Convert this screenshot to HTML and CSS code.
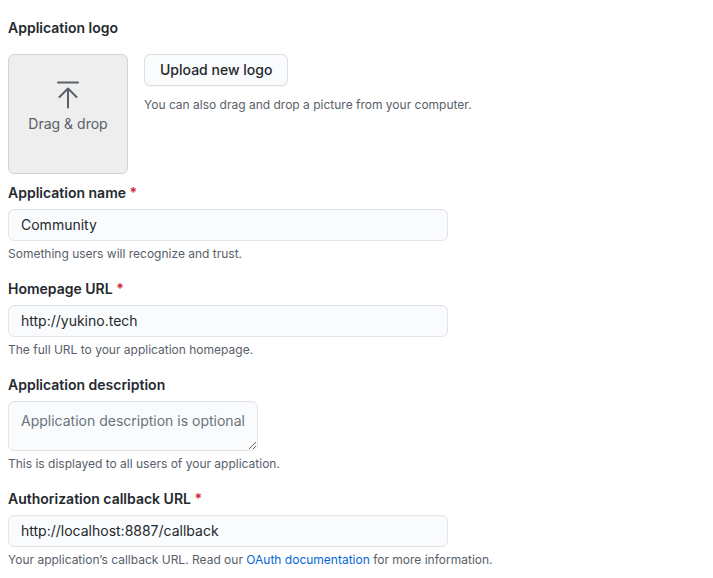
FILE: index.html
```html
<!DOCTYPE html>
<html lang="en">
<head>
<meta charset="utf-8">
<meta name="viewport" content="width=device-width, initial-scale=1">
<title>Application settings</title>
<link rel="stylesheet" href="styles.css">
</head>
<body>
<form class="settings">
  <section class="field">
    <h2 class="label">Application logo</h2>
    <div class="logo-row">
      <div class="dropzone">
        <svg class="upload-icon" viewBox="0 0 22 28" aria-hidden="true"><path d="M1 1.5h20M11 26.5V7.5M2.5 16L11 7.5l8.500 8.500"/></svg>
        <span>Drag &amp; drop</span>
      </div>
      <div class="logo-actions">
        <button class="button" type="button">Upload new logo</button>
        <p class="note">You can also drag and drop a picture from your computer.</p>
      </div>
    </div>
  </section>
  <div class="field">
    <label class="label" for="name">Application name <span class="required">*</span></label>
    <input class="control" id="name" type="text" value="Community">
    <p class="note">Something users will recognize and trust.</p>
  </div>
  <div class="field">
    <label class="label" for="homepage">Homepage URL <span class="required">*</span></label>
    <input class="control" id="homepage" type="text" value="http://yukino.tech">
    <p class="note">The full URL to your application homepage.</p>
  </div>
  <div class="field">
    <label class="label" for="description">Application description</label>
    <textarea class="control description" id="description" placeholder="Application description is optional"></textarea>
    <p class="note">This is displayed to all users of your application.</p>
  </div>
  <div class="field">
    <label class="label" for="callback">Authorization callback URL <span class="required">*</span></label>
    <input class="control" id="callback" type="text" value="http://localhost:8887/callback">
    <p class="note">Your application’s callback URL. Read our <a class="link" href="#oauth">OAuth documentation</a> for more information.</p>
  </div>
</form>
</body>
</html>
```
FILE: styles.css
```css
* { box-sizing: border-box; }
body {
  margin: 0;
  background: #fff;
  color: #24292e;
  font: 14px/20px Inter, "Liberation Sans", sans-serif;
}
.settings { padding: 18px 8px 8px; }
.field { margin-bottom: 16px; }
.label {
  display: block;
  margin: 0 0 6px;
  font-size: 14px;
  font-weight: 600;
  line-height: 20px;
}
.required { color: #cb2431; }
.logo-row {
  display: flex;
  gap: 16px;
  margin: 16px 0 -7px;
}
.dropzone {
  display: flex;
  flex-direction: column;
  align-items: center;
  gap: 5px;
  flex: none;
  width: 120px;
  height: 120px;
  padding-top: 26px;
  border: 1px solid #d1d5da;
  border-radius: 6px;
  background: #eee;
  color: #586069;
}
.upload-icon {
  width: 22px;
  height: 28px;
  fill: none;
  stroke: currentColor;
  stroke-width: 2;
  stroke-linecap: round;
  stroke-linejoin: round;
}
.button {
  height: 32px;
  padding: 0 15px;
  border: 1px solid #dcdee0;
  border-radius: 6px;
  background: #fafbfc;
  box-shadow: 0 1px 0 rgba(27, 31, 35, .04);
  color: #24292e;
  font: 500 14px/20px Inter, "Liberation Sans", sans-serif;
}
.logo-actions .note { margin-top: 10px; }
.control {
  display: block;
  width: 100%;
  max-width: 440px;
  height: 32px;
  padding: 4px 12px 6px;
  border: 1px solid #e1e4e8;
  border-radius: 6px;
  background: #fafbfc;
  box-shadow: inset 0 1px 0 rgba(225, 228, 232, .2);
  color: #24292e;
  font: 14px/20px Inter, "Liberation Sans", sans-serif;
}
.description {
  max-width: 250px;
  height: 50px;
  padding: 9px 12px;
  resize: both;
  overflow: hidden;
}
.description::placeholder { color: #6a737d; opacity: 1; }
.note {
  margin: 4px 0 0;
  color: #586069;
  font-size: 12px;
  line-height: 18px;
}
.link { color: #0366d6; text-decoration: none; }
```
